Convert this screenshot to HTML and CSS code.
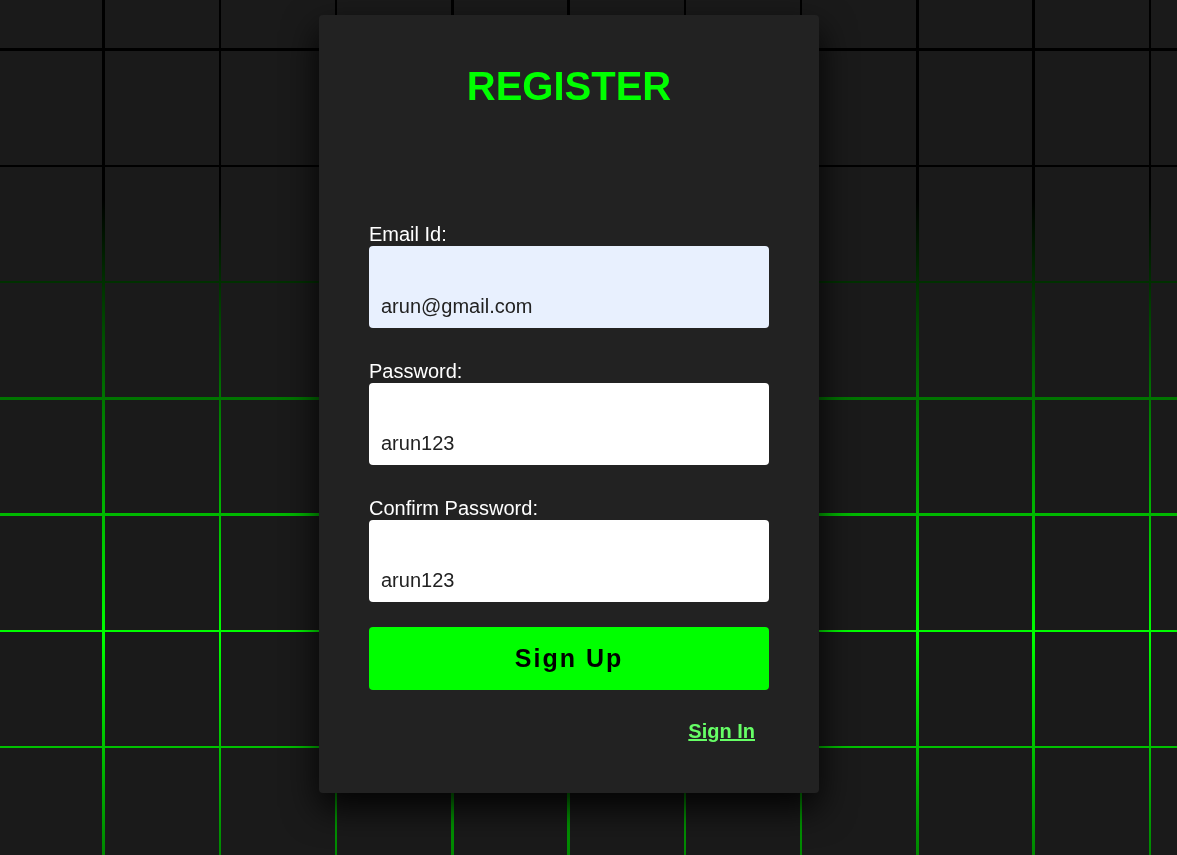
FILE: index.html
```html
<!DOCTYPE html>
<html lang="en">
<head>
<meta charset="utf-8">
<title>Register</title>
<link rel="stylesheet" href="styles.css">
</head>
<body>
<section class="bg">
  <div class="grid">
    <span></span><span></span><span></span><span></span><span></span><span></span><span></span><span></span><span></span><span></span><span></span>
    <span></span><span></span><span></span><span></span><span></span><span></span><span></span><span></span><span></span><span></span><span></span>
    <span></span><span></span><span></span><span></span><span></span><span></span><span></span><span></span><span></span><span></span><span></span>
    <span></span><span></span><span></span><span></span><span></span><span></span><span></span><span></span><span></span><span></span><span></span>
    <span></span><span></span><span></span><span></span><span></span><span></span><span></span><span></span><span></span><span></span><span></span>
    <span></span><span></span><span></span><span></span><span></span><span></span><span></span><span></span><span></span><span></span><span></span>
    <span></span><span></span><span></span><span></span><span></span><span></span><span></span><span></span><span></span><span></span><span></span>
    <span></span><span></span><span></span><span></span><span></span><span></span><span></span><span></span><span></span><span></span><span></span>
  </div>
</section>
<div class="card">
  <h2 class="title">REGISTER</h2>
  <form class="form">
    <div class="field">
      <label class="label" for="email">Email Id:</label>
      <input class="input input-autofill" id="email" type="text" value="arun@gmail.com">
    </div>
    <div class="field">
      <label class="label" for="pw">Password:</label>
      <input class="input" id="pw" type="text" value="arun123">
    </div>
    <div class="field field-last">
      <label class="label" for="cpw">Confirm Password:</label>
      <input class="input" id="cpw" type="text" value="arun123">
    </div>
    <button class="btn" type="button">Sign Up</button>
    <div class="links"><a class="link" href="#">Sign In</a></div>
  </form>
</div>
</body>
</html>
```
FILE: styles.css
```css
html, body {
  margin: 0;
  height: 100%;
  overflow: hidden;
  background: #000;
  font-family: "Liberation Sans", Arial, sans-serif;
}

.bg {
  position: fixed;
  inset: 0;
  overflow: hidden;
  background: linear-gradient(to bottom, #000 0, #000 200px, #0f0 635px, #000 1100px);
}

.grid {
  display: grid;
  grid-template-columns: repeat(11, 113.78px);
  grid-auto-rows: 113.78px;
  gap: 2.5px;
  margin: -65.5px 0 0 -11.5px;
}

.grid span {
  display: block;
  background: #1a1a1a;
}

.card {
  position: absolute;
  left: 319px;
  top: 15px;
  width: 500px;
  box-sizing: border-box;
  padding: 48px 50px 50px;
  background: #222;
  border-radius: 4px;
  box-shadow: 0 15px 35px rgba(0, 0, 0, 0.9);
}

.title {
  margin: 0 0 113px;
  font-size: 40px;
  line-height: 46px;
  font-weight: 700;
  color: #0f0;
  text-align: center;
}

.form {
  display: flex;
  flex-direction: column;
}

.field {
  display: flex;
  flex-direction: column;
  margin-bottom: 31px;
}

.field-last {
  margin-bottom: 25px;
}

.label {
  color: #fff;
  font-size: 20px;
  line-height: 24px;
}

.input {
  height: 82px;
  box-sizing: border-box;
  border: none;
  border-radius: 4px;
  padding: 49px 12px 10px;
  font-family: "Liberation Sans", Arial, sans-serif;
  font-size: 20px;
  color: #222;
  background: #fff;
  outline: none;
}

.input-autofill {
  background: #e8f0fe;
}

.btn {
  height: 63px;
  border: none;
  border-radius: 4px;
  background: #0f0;
  color: #000;
  font-family: "Liberation Sans", Arial, sans-serif;
  font-weight: 700;
  font-size: 25px;
  letter-spacing: 2px;
  cursor: pointer;
}

.links {
  display: flex;
  justify-content: flex-end;
  margin-top: 30px;
  padding-right: 14px;
}

.link {
  color: #66ff66;
  font-weight: 700;
  font-size: 20px;
  line-height: 23px;
  text-decoration: underline;
}
```
